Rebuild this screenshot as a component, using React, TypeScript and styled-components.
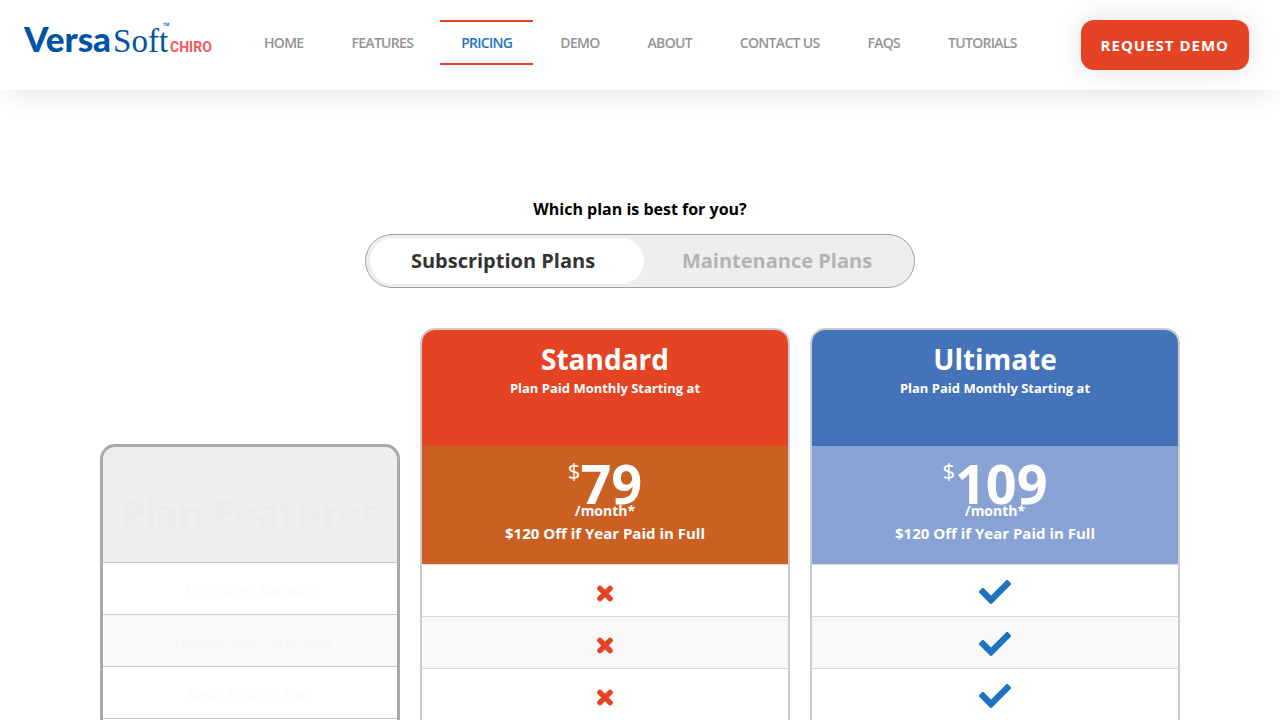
import React, { useState } from "react";
import styled, { createGlobalStyle } from "styled-components";
import { FaCheck } from "react-icons/fa";

const GlobalStyle = createGlobalStyle`
  *, *::before, *::after { box-sizing: border-box; }
  body {
    margin: 0;
    background: #fff;
    color: #000;
    font-family: "Open Sans", sans-serif;
  }
  h1, h2, p, ul { margin: 0; padding: 0; }
  ul { list-style: none; }
  a { text-decoration: none; }
  button { font-family: inherit; cursor: pointer; }
`;

const Header = styled.header`
  display: flex;
  align-items: flex-start;
  height: 90px;
  padding: 20px 31px 0 24px;
  background: #fff;
  box-shadow: 0 16px 24px -10px rgba(0, 0, 0, 0.1);
`;

const Logo = styled.a`
  display: flex;
  align-items: baseline;
  width: 185px;
  color: #0054a6;
  white-space: nowrap;
`;

const LogoBold = styled.span`
  margin-right: 2px;
  font: 900 35px/36px Lato, sans-serif;
`;

const LogoSerif = styled.span`
  font: 400 33px/36px "Liberation Serif", serif;
`;

const LogoMark = styled.sup`
  align-self: flex-start;
  width: 2px;
  font: 700 9px/12px "Open Sans", sans-serif;
  direction: rtl;
`;

const LogoProduct = styled.span`
  color: #f15a5a;
  font: 700 14px/36px Roboto, sans-serif;
`;

const Nav = styled.nav`
  display: flex;
  gap: 6px;
  margin-left: 34px;
`;

const NavLink = styled.a<{ $active?: boolean }>`
  height: 45px;
  padding: 0 21px;
  border: solid ${(p) => (p.$active ? "#e44424" : "transparent")};
  border-width: 2px 0;
  color: ${(p) => (p.$active ? "#1e73be" : "#949494")};
  font-size: 14px;
  font-weight: 600;
  line-height: 41px;
  letter-spacing: -0.05em;
  white-space: nowrap;
`;

const DemoButton = styled.button`
  height: 50px;
  margin-left: auto;
  padding: 0 20px;
  border: 0;
  border-radius: 13px;
  background: #e44424;
  box-shadow: 0 0 30px rgba(0, 0, 0, 0.12);
  color: #fff;
  font-size: 15px;
  font-weight: 700;
  letter-spacing: 1px;
  white-space: nowrap;
`;

const Main = styled.main`
  max-width: 1120px;
  margin: 0 auto;
  padding: 107px 20px 0;
`;

const Question = styled.h1`
  font-size: 16px;
  line-height: 24px;
  text-align: center;
`;

const Switcher = styled.div`
  position: relative;
  display: grid;
  grid-template-columns: 1fr 1fr;
  max-width: 550px;
  height: 54px;
  margin: 13px auto 40px;
  border: 1px solid #a0a0a0;
  border-radius: 27px;
  background: #eee;
`;

const Thumb = styled.span<{ $right: boolean }>`
  position: absolute;
  top: 3px;
  bottom: 3px;
  left: ${(p) => (p.$right ? "calc(50% - 4px)" : "4px")};
  width: 50%;
  border-radius: 23px;
  background: #fff;
`;

const SwitchOption = styled.button<{ $active: boolean }>`
  position: relative;
  padding: 0 0 2px;
  border: 0;
  background: none;
  color: ${(p) => (p.$active ? "#333" : "#b3b3b3")};
  font-size: 20px;
  font-weight: 700;
`;

const Plans = styled.div`
  display: grid;
  grid-template-columns: 300fr 370fr 370fr;
  gap: 20px;
  align-items: end;
`;

const FeatureCard = styled.section`
  text-align: center;
`;

const FeatureHead = styled.div`
  height: 119px;
  padding-top: 37px;
  border: 3px solid #a7a9ac;
  border-bottom: 1px solid #c8c8c8;
  border-radius: 15px 15px 0 0;
  background: #eee;
`;

const FeatureTitle = styled.h2`
  color: #ebebeb;
  font-size: 38px;
  line-height: 56px;
  white-space: nowrap;
`;

const FeatureList = styled.ul`
  padding-bottom: 53px;
  border: solid #a7a9ac;
  border-width: 0 3px;
`;

const Feature = styled.li`
  height: 52px;
  padding-top: 3px;
  border-bottom: 1px solid #c8c8c8;
  color: #fcfcfc;
  font-size: 14px;
  font-weight: 700;
  line-height: 48px;
  &:nth-child(even) {
    background: #f9f9f9;
    color: #f6f6f6;
  }
`;

const PlanCard = styled.section`
  border: 2px solid #ccc;
  border-bottom: 0;
  border-radius: 15px 15px 0 0;
  overflow: hidden;
  text-align: center;
`;

const PlanHead = styled.div<{ $color: string }>`
  height: 116px;
  padding-top: 10px;
  background: ${(p) => p.$color};
  color: #fff;
`;

const PlanName = styled.h2`
  font-size: 28px;
  line-height: 38px;
`;

const PlanNote = styled.p`
  font-size: 13px;
  font-weight: 700;
  line-height: 20px;
`;

const PriceBox = styled.div<{ $color: string }>`
  height: 118px;
  padding-top: 9px;
  background: ${(p) => p.$color};
  color: #fff;
  font-weight: 700;
`;

const Price = styled.p`
  display: flex;
  justify-content: center;
  height: 46px;
  font-size: 54px;
  line-height: 56px;
`;

const Currency = styled.span`
  font-size: 22px;
  font-weight: 400;
  line-height: 30px;
`;

const Period = styled.p`
  font-size: 14px;
  line-height: 20px;
`;

const Discount = styled.p`
  font-size: 15px;
  line-height: 24px;
`;

const PlanList = styled.ul`
  padding-bottom: 52px;
`;

const PlanItem = styled.li`
  display: flex;
  align-items: center;
  justify-content: center;
  height: 52px;
  padding-top: 2px;
  border-top: 1px solid #d9d9d9;
  &:nth-child(even) {
    background: #f9f9f9;
  }
`;

const Check = styled(FaCheck)`
  display: block;
  color: #1e73be;
`;

const Cross = () => (
  <svg width="16" height="20" viewBox="0 0 16 20" role="img" aria-label="Not included">
    <path d="M2.9 6.4 L13.1 16.6 M13.1 6.4 L2.9 16.6" stroke="#e44424" strokeWidth="5.4" strokeLinecap="round" />
  </svg>
);

const links = ["HOME", "FEATURES", "PRICING", "DEMO", "ABOUT", "CONTACT US", "FAQS", "TUTORIALS"];
const features = ["Unlimited Support", "Training after First Year", "Basic Texting Plan"];
const modes = ["Subscription Plans", "Maintenance Plans"];
const plans = [
  { name: "Standard", price: "79", head: "#e44424", body: "#cb6023", included: false },
  { name: "Ultimate", price: "109", head: "#4573b9", body: "#88a2d4", included: true },
];

export default function App() {
  const [mode, setMode] = useState(0);
  return (
    <>
      <GlobalStyle />
      <Header>
        <Logo href="#">
          <LogoBold>Versa</LogoBold>
          <LogoSerif>Soft</LogoSerif>
          <LogoMark>™</LogoMark>
          <LogoProduct>CHIRO</LogoProduct>
        </Logo>
        <Nav>
          {links.map((label) => (
            <NavLink key={label} href="#" $active={label === "PRICING"}>
              {label}
            </NavLink>
          ))}
        </Nav>
        <DemoButton>REQUEST DEMO</DemoButton>
      </Header>
      <Main>
        <Question>Which plan is best for you?</Question>
        <Switcher>
          <Thumb $right={mode === 1} />
          {modes.map((label, i) => (
            <SwitchOption key={label} $active={mode === i} aria-pressed={mode === i} onClick={() => setMode(i)}>
              {label}
            </SwitchOption>
          ))}
        </Switcher>
        <Plans>
          <FeatureCard>
            <FeatureHead>
              <FeatureTitle>Plan Features</FeatureTitle>
            </FeatureHead>
            <FeatureList>
              {features.map((f) => (
                <Feature key={f}>{f}</Feature>
              ))}
            </FeatureList>
          </FeatureCard>
          {plans.map((plan) => (
            <PlanCard key={plan.name}>
              <PlanHead $color={plan.head}>
                <PlanName>{plan.name}</PlanName>
                <PlanNote>Plan Paid Monthly Starting at</PlanNote>
              </PlanHead>
              <PriceBox $color={plan.body}>
                <Price>
                  <Currency>$</Currency>
                  {plan.price}
                </Price>
                <Period>/month*</Period>
                <Discount>$120 Off if Year Paid in Full</Discount>
              </PriceBox>
              <PlanList>
                {features.map((f) => (
                  <PlanItem key={f}>{plan.included ? <Check size={32} title="Included" /> : <Cross />}</PlanItem>
                ))}
              </PlanList>
            </PlanCard>
          ))}
        </Plans>
      </Main>
    </>
  );
}
